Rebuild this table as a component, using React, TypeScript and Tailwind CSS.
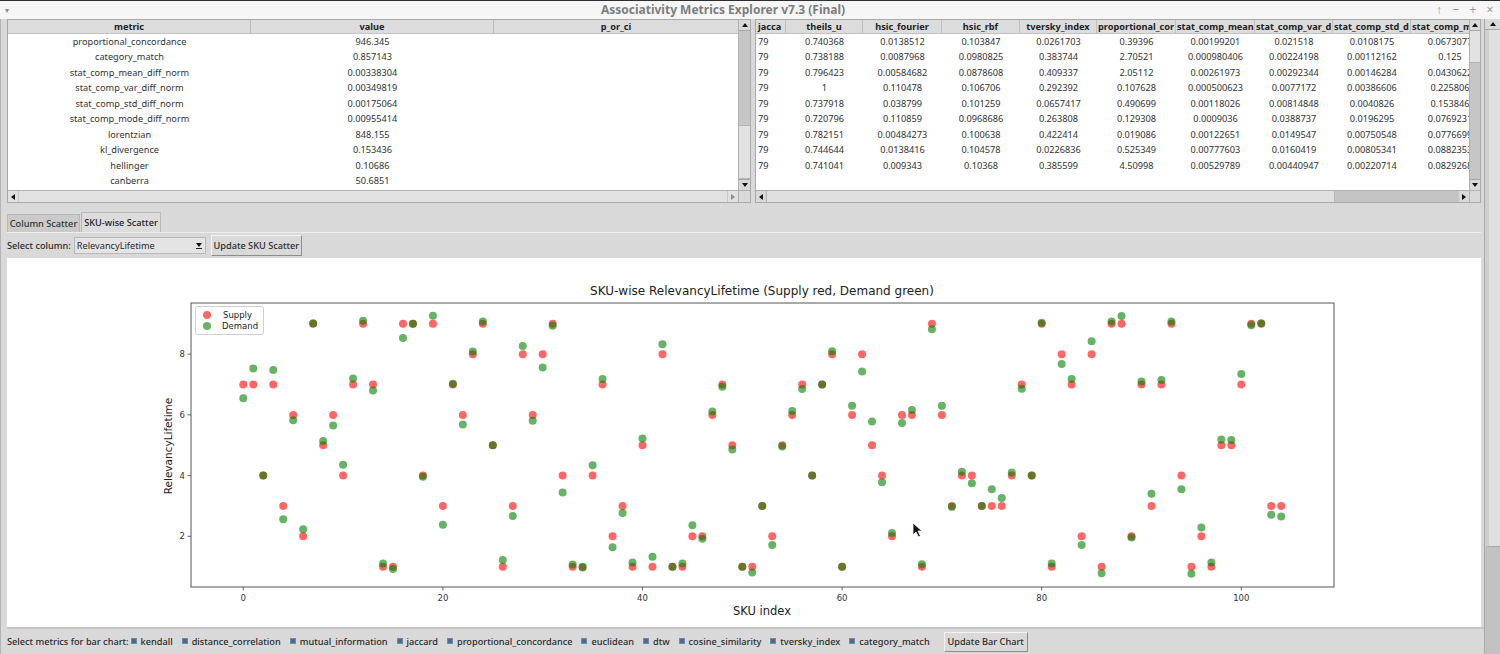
import React from "react";

const supply = [
  7, 7, 4, 7, 3, 6, 2, 9, 5, 6, 4, 7, 9, 7, 1, 1, 9, 9, 4, 9, 3, 7, 6, 8, 9, 5, 1, 3, 8, 6, 8, 9, 4, 1, 1,
  4, 7, 2, 3, 1, 5, 1, 8, 1, 1, 2, 2, 6, 7, 5, 1, 1, 3, 2, 5, 6, 7, 4, 7, 8, 1, 6, 8, 5, 4, 2, 6, 6, 1, 9,
  6, 3, 4, 4, 3, 3, 3, 4, 7, 4, 9, 1, 8, 7, 2, 8, 1, 9, 9, 2, 7, 3, 7, 9, 4, 1, 2, 1, 5, 5, 7, 9, 9, 3, 3,
];

const demand = [
  6.55, 7.53, 4, 7.48, 2.56, 5.82, 2.23, 9.02, 5.14, 5.65, 4.36, 7.2, 9.1, 6.8, 1.1, 0.92, 8.53, 9, 3.96,
  9.27, 2.38, 7.03, 5.68, 8.09, 9.08, 5, 1.22, 2.67, 8.27, 5.81, 7.56, 8.94, 3.44, 1.07, 0.97, 4.34, 7.18,
  1.64, 2.77, 1.14, 5.22, 1.33, 8.33, 1, 1.1, 2.36, 1.92, 6.11, 6.93, 4.86, 1, 0.81, 3, 1.71, 4.96, 6.13,
  6.85, 4, 7, 8.1, 1, 6.3, 7.43, 5.78, 3.78, 2.11, 5.73, 6.16, 1.08, 8.82, 6.3, 2.97, 4.13, 3.75, 3, 3.55,
  3.26, 4.1, 6.86, 4, 9.04, 1.1, 7.68, 7.18, 1.71, 8.43, 0.78, 9.08, 9.26, 1.96, 7.1, 3.4, 7.15, 9.08, 3.55,
  0.77, 2.29, 1.14, 5.19, 5.17, 7.35, 8.95, 9.02, 2.71, 2.65,
];

const sx = (i: number) => 243.3 + 9.98 * i;
const sy = (v: number) => 536.3 - (v - 2) * 30.35;

const leftRows = [
  ["proportional_concordance", "946.345"],
  ["category_match", "0.857143"],
  ["stat_comp_mean_diff_norm", "0.00338304"],
  ["stat_comp_var_diff_norm", "0.00349819"],
  ["stat_comp_std_diff_norm", "0.00175064"],
  ["stat_comp_mode_diff_norm", "0.00955414"],
  ["lorentzian", "848.155"],
  ["kl_divergence", "0.153436"],
  ["hellinger", "0.10686"],
  ["canberra", "50.6851"],
];

// header text is what the clipped headings show
const rightCols = [
  { name: "jacca", w: "w-[30px]", h: "justify-start pl-[2px]", v: "justify-start pl-[2px]", values: Array(9).fill("79") },
  { name: "theils_u", w: "w-[77px]", h: "justify-center", v: "justify-center", values: ["0.740368", "0.738188", "0.796423", "1", "0.737918", "0.720796", "0.782151", "0.744644", "0.741041"] },
  { name: "hsic_fourier", w: "w-[79px]", h: "justify-center", v: "justify-center", values: ["0.0138512", "0.0087968", "0.00584682", "0.110478", "0.038799", "0.110859", "0.00484273", "0.0138416", "0.009343"] },
  { name: "hsic_rbf", w: "w-[78px]", h: "justify-center", v: "justify-center", values: ["0.103847", "0.0980825", "0.0878608", "0.106706", "0.101259", "0.0968686", "0.100638", "0.104578", "0.10368"] },
  { name: "tversky_index", w: "w-[77px]", h: "justify-center", v: "justify-center", values: ["0.0261703", "0.383744", "0.409337", "0.292392", "0.0657417", "0.263808", "0.422414", "0.0226836", "0.385599"] },
  { name: "proportional_cor", w: "w-[79px]", h: "justify-start pl-px", v: "justify-center", values: ["0.39396", "2.70521", "2.05112", "0.107628", "0.490699", "0.129308", "0.019086", "0.525349", "4.50998"] },
  { name: "stat_comp_mean", w: "w-[79px]", h: "justify-start pl-px", v: "justify-center", values: ["0.00199201", "0.000980406", "0.00261973", "0.000500623", "0.00118026", "0.0009036", "0.00122651", "0.00777603", "0.00529789"] },
  { name: "stat_comp_var_d", w: "w-[78px]", h: "justify-start pl-px", v: "justify-center", values: ["0.021518", "0.00224198", "0.00292344", "0.0077172", "0.00814848", "0.0388737", "0.0149547", "0.0160419", "0.00440947"] },
  { name: "stat_comp_std_d", w: "w-[78px]", h: "justify-start pl-px", v: "justify-center", values: ["0.0108175", "0.00112162", "0.00146284", "0.00386606", "0.0040826", "0.0196295", "0.00750548", "0.00805341", "0.00220714"] },
  { name: "stat_comp_m", w: "w-[78px]", h: "justify-start pl-px", v: "justify-center", values: ["0.0673077", "0.125", "0.0430622", "0.225806", "0.153846", "0.0769231", "0.0776699", "0.0882353", "0.0829268"] },
];

const barMetrics = [
  "kendall",
  "distance_correlation",
  "mutual_information",
  "jaccard",
  "proportional_concordance",
  "euclidean",
  "dtw",
  "cosine_similarity",
  "tversky_index",
  "category_match",
];

function Arrow({ dir }: { dir: "up" | "down" | "left" | "right" }) {
  const pts = {
    up: "0,5 3,1 6,5",
    down: "0,1 6,1 3,5",
    left: "5,0 5,6 1,3",
    right: "1,0 1,6 5,3",
  }[dir];
  return (
    <svg width="6" height="6" viewBox="0 0 6 6">
      <polygon points={pts} fill="#111" />
    </svg>
  );
}

function TitleBar() {
  return (
    <div className="h-[19px] shrink-0 flex items-center bg-[#f6f6f6] border-t border-[#2e2e2e] text-[#8a8a8a]">
      <span className="w-[20px] pl-[5px] text-[8px] leading-none">▾</span>
      <div className="w-[1406px] text-center font-bold text-[12px] text-[#7d7d7d]">
        Associativity Metrics Explorer v7.3 (Final)
      </div>
      <div className="flex-1 flex items-center justify-end gap-[9px] pr-[6px] text-[12px] leading-none text-[#9a9a9a]">
        <span className="w-[8px] text-center">↑</span>
        <span className="w-[8px] text-center">−</span>
        <span className="w-[8px] text-center">+</span>
        <span className="w-[8px] text-center">×</span>
      </div>
    </div>
  );
}

function LeftTable() {
  return (
    <div className="w-[744px] h-[184px] border border-[#a9a9a9] bg-white flex flex-col">
      <div className="flex h-[170px]">
        <div className="w-[730px] flex flex-col overflow-hidden">
          <div className="h-[14px] flex bg-[#dcdcdc] border-b border-[#c4c4c4] font-bold text-[#222]">
            <div className="w-[243px] flex items-center justify-center border-r border-[#bcbcbc]">metric</div>
            <div className="w-[243px] flex items-center justify-center border-r border-[#bcbcbc]">value</div>
            <div className="w-[244px] flex items-center justify-center">p_or_ci</div>
          </div>
          {leftRows.map(([m, v]) => (
            <div key={m} className="h-[15.5px] flex items-center text-[#333]">
              <div className="w-[243px] text-center">{m}</div>
              <div className="w-[243px] text-center">{v}</div>
              <div className="w-[244px]" />
            </div>
          ))}
        </div>
        <div className="w-[12px] flex flex-col bg-[#c6c6c6] border-l border-[#b0b0b0]">
          <div className="h-[11px] flex items-center justify-center bg-[#d9d9d9] border-b border-[#a8a8a8]">
            <Arrow dir="up" />
          </div>
          <div className="h-[94px]" />
          <div className="flex-1 bg-[#e2e2e2] border-y border-[#b4b4b4]" />
          <div className="h-[11px] flex items-center justify-center bg-[#d9d9d9] border-t border-[#a8a8a8]">
            <Arrow dir="down" />
          </div>
        </div>
      </div>
      <div className="flex h-[12px] border-t border-[#b0b0b0]">
        <div className="w-[730px] flex bg-[#e1e1e1]">
          <div className="w-[10px] flex items-center justify-center">
            <Arrow dir="left" />
          </div>
          <div className="flex-1 border-x border-[#c8c8c8]" />
          <div className="w-[10px] flex items-center justify-center opacity-40">
            <Arrow dir="right" />
          </div>
        </div>
        <div className="w-[12px] bg-[#d9d9d9] border-l border-[#b0b0b0]" />
      </div>
    </div>
  );
}

function RightTable() {
  return (
    <div className="w-[726px] h-[184px] border border-[#a9a9a9] bg-white flex flex-col">
      <div className="flex h-[170px]">
        <div className="w-[713px] flex overflow-hidden">
          {rightCols.map((c) => (
            <div key={c.name} className="flex flex-col shrink-0">
              <div
                className={`${c.w} ${c.h} h-[14px] flex items-center overflow-hidden whitespace-nowrap bg-[#dcdcdc] border-b border-r border-[#c0c0c0] font-bold text-[#222]`}
              >
                {c.name}
              </div>
              {c.values.map((v, i) => (
                <div key={i} className={`${c.w} ${c.v} h-[15.5px] flex items-center whitespace-nowrap text-[#333]`}>
                  {v}
                </div>
              ))}
            </div>
          ))}
        </div>
        <div className="w-[11px] flex flex-col bg-[#c6c6c6] border-l border-[#b0b0b0]">
          <div className="h-[11px] flex items-center justify-center bg-[#d9d9d9] border-b border-[#a8a8a8]">
            <Arrow dir="up" />
          </div>
          <div className="h-[32px] bg-[#e2e2e2] border-b border-[#b4b4b4]" />
          <div className="flex-1" />
          <div className="h-[11px] flex items-center justify-center bg-[#d9d9d9] border-t border-[#a8a8a8]">
            <Arrow dir="down" />
          </div>
        </div>
      </div>
      <div className="flex h-[12px] border-t border-[#b0b0b0]">
        <div className="w-[713px] flex bg-[#c4c4c4]">
          <div className="w-[10px] flex items-center justify-center bg-[#d9d9d9]">
            <Arrow dir="left" />
          </div>
          <div className="w-[569px] bg-[#e0e0e0] border-x border-[#b4b4b4]" />
          <div className="flex-1" />
          <div className="w-[10px] flex items-center justify-center bg-[#d9d9d9]">
            <Arrow dir="right" />
          </div>
        </div>
        <div className="w-[11px] bg-[#d9d9d9] border-l border-[#b0b0b0]" />
      </div>
    </div>
  );
}

function Chart() {
  const xt = [0, 20, 40, 60, 80, 100];
  const yt = [2, 4, 6, 8];
  return (
    <svg width="1474" height="369" viewBox="7 258 1474 369" style={{ fontFamily: "'DejaVu Sans', sans-serif" }}>
      <text x="762" y="295" fontSize="12" textAnchor="middle" fill="#222">
        SKU-wise RelevancyLifetime (Supply red, Demand green)
      </text>
      <rect x="191" y="303" width="1143" height="284" fill="white" stroke="#555" strokeWidth="1" />
      {xt.map((k) => (
        <g key={k}>
          <line x1={sx(k)} x2={sx(k)} y1="587" y2="590.5" stroke="#444" strokeWidth="0.8" />
          <text x={sx(k)} y="601" fontSize="8.5" textAnchor="middle" fill="#333">
            {k}
          </text>
        </g>
      ))}
      {yt.map((v) => (
        <g key={v}>
          <line x1="187.5" x2="191" y1={sy(v)} y2={sy(v)} stroke="#444" strokeWidth="0.8" />
          <text x="185" y={sy(v) + 3} fontSize="8.5" textAnchor="end" fill="#333">
            {v}
          </text>
        </g>
      ))}
      <text x="762" y="615" fontSize="11.5" textAnchor="middle" fill="#222">
        SKU index
      </text>
      <text x="172" y="446" fontSize="10.5" textAnchor="middle" fill="#222" transform="rotate(-90 172 446)">
        RelevancyLifetime
      </text>
      {supply.map((v, i) => (
        <circle key={`s${i}`} cx={sx(i)} cy={sy(v)} r="4" fill="#ff0000" fillOpacity="0.6" />
      ))}
      {demand.map((v, i) => (
        <circle key={`d${i}`} cx={sx(i)} cy={sy(v)} r="4" fill="#008000" fillOpacity="0.6" />
      ))}
      <rect x="195.5" y="306.5" width="68" height="28" rx="2" fill="white" fillOpacity="0.85" stroke="#cfcfcf" />
      <circle cx="207" cy="315" r="4" fill="#ff0000" fillOpacity="0.6" />
      <circle cx="207" cy="326" r="4" fill="#008000" fillOpacity="0.6" />
      <text x="223" y="318" fontSize="8.5" fill="#222">
        Supply
      </text>
      <text x="222" y="329" fontSize="8.5" fill="#222">
        Demand
      </text>
      <polygon
        points="913,523 913,535 916,532 918.5,537 920.5,536 918,531 922,531"
        fill="#111"
        stroke="white"
        strokeWidth="0.8"
      />
    </svg>
  );
}

function TkButton({ children, className }: { children: React.ReactNode; className: string }) {
  return (
    <div
      className={`${className} flex items-center justify-center bg-[#d9d9d9] border border-t-[#f4f4f4] border-l-[#f4f4f4] border-b-[#8c8c8c] border-r-[#8c8c8c] font-medium text-[#2a2a2a] whitespace-nowrap`}
    >
      {children}
    </div>
  );
}

export default function App() {
  return (
    <div className="w-[1500px] h-[654px] overflow-hidden bg-[#d9d9d9] font-['Noto_Sans',sans-serif] text-[9.2px] text-[#2a2a2a] flex flex-col">
      <TitleBar />
      <div className="flex flex-1 min-h-0">
        <div className="w-[1484px] flex flex-col pl-[6px] border-l border-[#b3b3b3]">
          <div className="h-[185px] flex gap-[4px] items-start">
            <LeftTable />
            <RightTable />
          </div>

          <div className="h-[20px] mt-[8px] flex items-end">
            <div className="h-[18px] w-[73px] flex items-center justify-center bg-[#cacaca] border border-b-0 border-[#b8b8b8] font-medium text-[#333]">
              Column Scatter
            </div>
            <div className="h-[20px] w-[80px] ml-px flex items-center justify-center bg-[#dcdcdc] border border-b-0 border-[#b8b8b8] font-medium text-[#222]">
              SKU-wise Scatter
            </div>
          </div>

          <div className="w-[1474px] h-[395px] flex flex-col">
            <div className="h-[26px] flex items-center border-t border-[#eeeeee] bg-[#d9d9d9]">
              <span className="font-medium">Select column:</span>
              <div className="ml-[3px] w-[132px] h-[17px] flex items-center bg-[#e4e4e4] border border-[#b9b9b9]">
                <span className="flex-1 pl-[2px]">RelevancyLifetime</span>
                <div className="w-[11px] h-full flex flex-col items-center justify-center">
                  <Arrow dir="down" />
                  <div className="w-[6px] h-px bg-[#222]" />
                </div>
              </div>
              <TkButton className="ml-[5px] w-[91px] h-[21px]">Update SKU Scatter</TkButton>
            </div>
            <div className="h-[369px] bg-white">
              <Chart />
            </div>
          </div>

          <div className="h-[27px] flex items-center border-t-2 border-[#c6c6c6]">
            <span className="font-medium">Select metrics for bar chart:</span>
            {barMetrics.map((m, i) => (
              <div key={m} className={`flex items-center ${i === 0 ? "ml-[2px]" : "ml-[9px]"}`}>
                <div className="w-[6px] h-[6px] bg-[#4a6b8e] border border-[#6f8aa8]" />
                <span className="ml-[4px] font-medium">{m}</span>
              </div>
            ))}
            <TkButton className="ml-[14px] w-[84px] h-[20px]">Update Bar Chart</TkButton>
          </div>
        </div>

        <div className="w-[16px] flex flex-col border-l border-[#a9a9a9] bg-[#c2c2c2]">
          <div className="h-[11px] flex items-center justify-center bg-[#d9d9d9] border-b border-[#a8a8a8]">
            <Arrow dir="up" />
          </div>
          <div className="h-[517px] bg-[#e0e0e0] border-l-4 border-[#cfcfcf] border-b border-b-[#a8a8a8]" />
          <div className="flex-1" />
        </div>
      </div>
    </div>
  );
}
